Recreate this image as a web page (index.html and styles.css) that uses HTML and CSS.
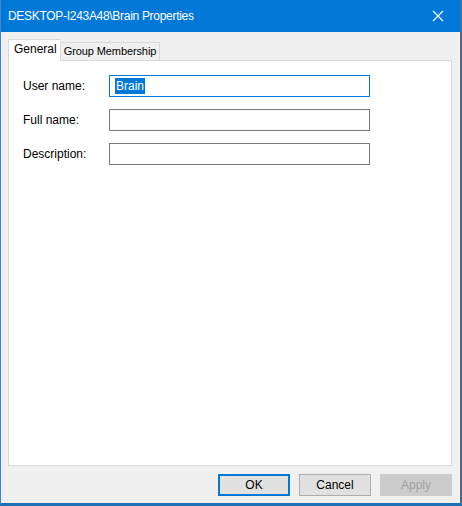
FILE: index.html
```html
<!DOCTYPE html>
<html>
<head>
<meta charset="utf-8">
<link rel="stylesheet" href="styles.css">
</head>
<body>
<div class="window">
  <div class="titlebar">
    <span class="title">DESKTOP-I243A48\Brain Properties</span>
    <svg class="close" width="12" height="12" viewBox="0 0 12 12"><path d="M1 1 L11 11 M11 1 L1 11" stroke="#fff" stroke-width="1.2" fill="none"/></svg>
  </div>
  <div class="content">
    <div class="tabs">
      <div class="tab active">General</div>
      <div class="tab">Group Membership</div>
    </div>
    <div class="panel">
      <div class="row">
        <span class="label">User name:</span>
        <div class="field focused"><span class="sel">Brain</span></div>
      </div>
      <div class="row">
        <span class="label">Full name:</span>
        <div class="field"></div>
      </div>
      <div class="row">
        <span class="label">Description:</span>
        <div class="field"></div>
      </div>
    </div>
    <div class="buttons">
      <div class="btn default">OK</div>
      <div class="btn">Cancel</div>
      <div class="btn disabled">Apply</div>
    </div>
  </div>
</div>
</body>
</html>
```
FILE: styles.css
```css
html, body {
  margin: 0;
  padding: 0;
  background: #f0f0f0;
}
.window {
  width: 462px;
  height: 506px;
  box-sizing: border-box;
  border-left: 1px solid #3c86c9;
  border-right: 2px solid #3a6f9e;
  border-bottom: 3px solid #1f6fb5;
  background: #f0f0f0;
  font-family: "Liberation Sans", Arial, sans-serif;
  font-size: 12px;
  color: #000;
  overflow: hidden;
}
.titlebar {
  height: 32px;
  background: #0078d7;
  color: #fff;
  display: flex;
  align-items: center;
  justify-content: space-between;
  padding: 0 16px 0 8px;
  margin-left: -1px;
}
.title {
  font-size: 12px;
  letter-spacing: -0.3px;
}
.close {
  display: block;
}
.content {
  padding: 7px 8px 0 7px;
}
.tabs {
  display: flex;
  align-items: flex-end;
  height: 21px;
}
.tab {
  box-sizing: border-box;
  height: 18px;
  padding: 0 3px;
  border: 1px solid #d9d9d9;
  border-bottom: none;
  background: #f0f0f0;
  line-height: 17px;
  font-size: 11px;
  letter-spacing: -0.1px;
}
.tab.active {
  height: 22px;
  margin-bottom: -1px;
  background: #fff;
  padding: 0 3px 0 5px;
  line-height: 19px;
  font-size: 12px;
  letter-spacing: 0;
  position: relative;
  z-index: 1;
  border-right: none;
}
.panel {
  height: 406px;
  box-sizing: border-box;
  background: #fff;
  border: 1px solid #d9d9d9;
  padding: 14px 0 0 14px;
  display: flex;
  flex-direction: column;
  gap: 12px;
}
.row {
  display: flex;
  align-items: center;
  height: 22px;
}
.label {
  width: 86px;
  font-size: 12px;
}
.field {
  width: 261px;
  height: 22px;
  box-sizing: border-box;
  border: 1px solid #7a7a7a;
  display: flex;
  align-items: center;
  padding-left: 5px;
}
.field.focused {
  border-color: #0078d7;
}
.sel {
  background: #0078d7;
  color: #fff;
  line-height: 16px;
  padding: 0 1px;
}
.buttons {
  display: flex;
  justify-content: flex-end;
  gap: 9px;
  margin-top: 8px;
}
.btn {
  width: 72px;
  height: 22px;
  box-sizing: border-box;
  border: 1px solid #adadad;
  background: #e1e1e1;
  display: flex;
  align-items: center;
  justify-content: center;
  font-size: 12px;
}
.btn.default {
  border: 2px solid #0078d7;
}
.btn.disabled {
  background: #cccccc;
  border-color: #cccccc;
  color: #a0a0a0;
}
```
